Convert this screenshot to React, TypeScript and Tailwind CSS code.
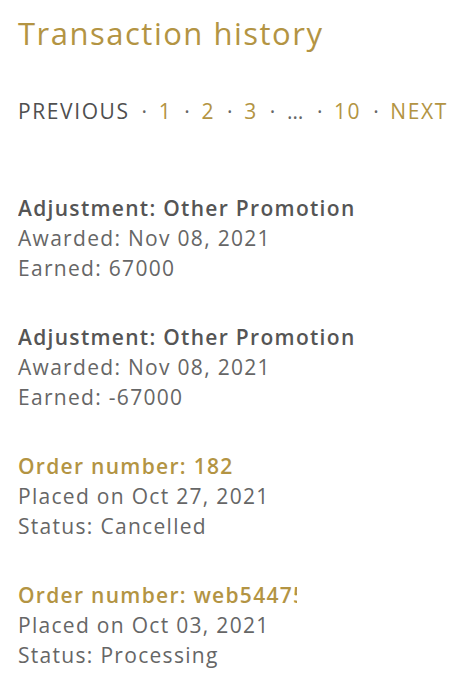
import React from 'react';

interface Entry {
  title: string;
  lines: string[];
  kind: 'adjustment' | 'order';
  clip?: string;
}

const entries: Entry[] = [
  { title: 'Adjustment: Other Promotion', lines: ['Awarded: Nov 08, 2021', 'Earned: 67000'], kind: 'adjustment' },
  { title: 'Adjustment: Other Promotion', lines: ['Awarded: Nov 08, 2021', 'Earned: -67000'], kind: 'adjustment' },
  { title: 'Order number: 18284719', lines: ['Placed on Oct 27, 2021', 'Status: Cancelled'], kind: 'order', clip: 'w-[215px]' },
  { title: 'Order number: web54475112', lines: ['Placed on Oct 03, 2021', 'Status: Processing'], kind: 'order', clip: 'w-[279px]' },
];

const pages = ['1', '2', '3', '…', '10', 'NEXT'];

export default function App() {
  return (
    <div className="min-h-screen bg-white px-[18px] pt-[13px] font-['Open_Sans','Noto_Sans',sans-serif] text-[#666666]">
      <h1 className="text-[31px] leading-[40px] text-[#b39443] tracking-[1.5px]">Transaction history</h1>

      {/* Pagination */}
      <div className="mt-[43px] flex items-center text-[21px] leading-[30px] whitespace-nowrap tracking-[1.6px]">
        <span className="text-[#4f4f4f]">PREVIOUS</span>
        {pages.map((p) => (
          <span key={p} className="flex items-center">
            <span className="ml-[12px] mr-[10px] text-[#666666]">·</span>
            <span className={p === '…' ? 'text-[#666666]' : 'text-[#b39443]'}>{p}</span>
          </span>
        ))}
      </div>

      {/* Entries */}
      <div className="mt-[67px] flex flex-col gap-[39px]">
        {entries.map((e, i) => (
          <div key={i} className="text-[21px] leading-[30px] tracking-[1.3px]">
            <div
              className={`font-semibold whitespace-nowrap overflow-hidden ${
                e.kind === 'order' ? 'text-[#b39443]' : 'text-[#555555]'
              } ${e.clip ?? ''}`}
            >
              {e.title}
            </div>
            {e.lines.map((l) => (
              <div key={l}>{l}</div>
            ))}
          </div>
        ))}
      </div>
    </div>
  );
}
